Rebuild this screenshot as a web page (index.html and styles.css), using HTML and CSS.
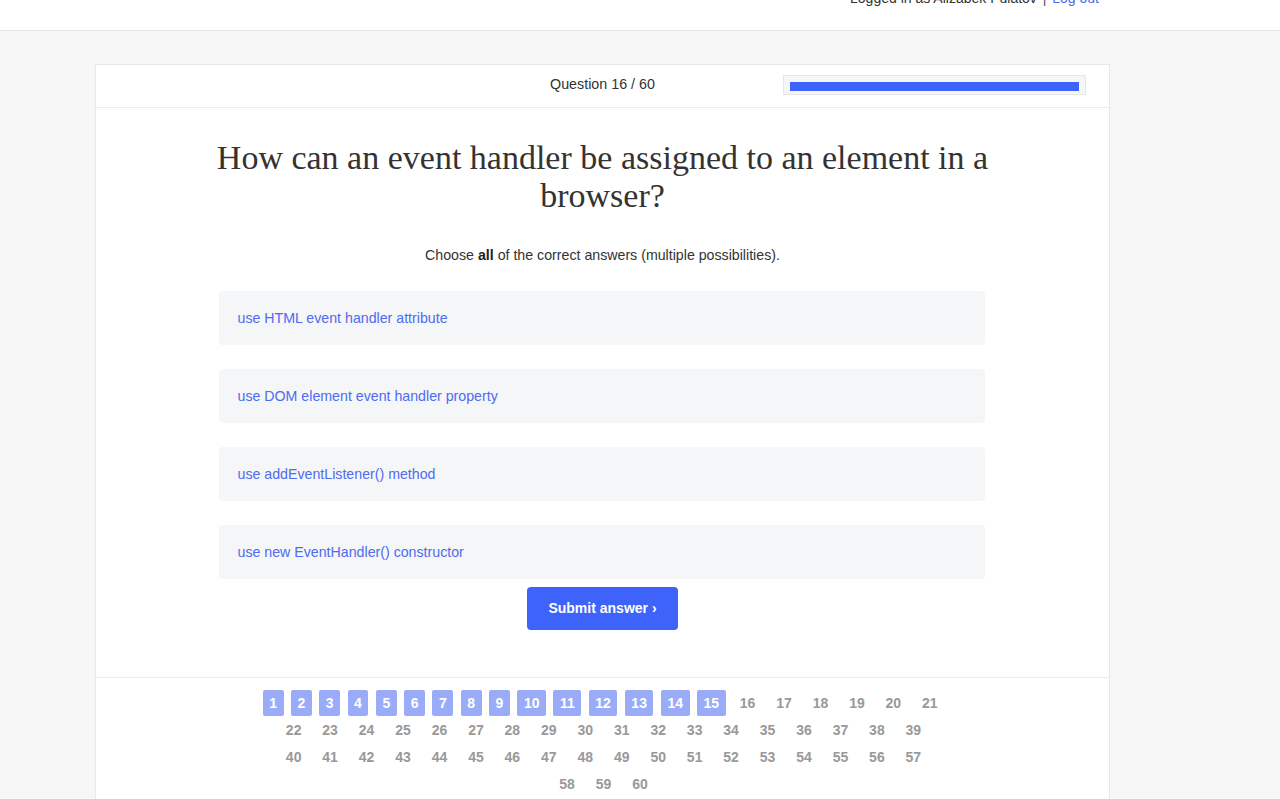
FILE: index.html
```html
<!DOCTYPE html>
<html lang="en">
<head>
<meta charset="utf-8">
<title>Quiz</title>
<link rel="stylesheet" href="styles.css">
</head>
<body>
<header class="topbar">
  <div class="user">Logged in as Alizabek Pulatov <span class="sep">|</span> <a class="logout" href="#">Log out</a></div>
</header>
<main class="card">
  <div class="card-head">
    <div class="qcount">Question 16 / 60</div>
    <div class="progress"><div class="progress-fill"></div></div>
  </div>
  <section class="question">
    <h1 class="title">How can an event handler be assigned to an element in a browser?</h1>
    <p class="hint">Choose <b>all</b> of the correct answers (multiple possibilities).</p>
    <div class="options">
      <div class="option">use HTML event handler attribute</div>
      <div class="option">use DOM element event handler property</div>
      <div class="option">use addEventListener() method</div>
      <div class="option">use new EventHandler() constructor</div>
    </div>
    <button class="submit">Submit answer ›</button>
  </section>
  <nav class="pager">
    <div class="pages">
      <span class="pg done">1</span><span class="pg done">2</span><span class="pg done">3</span><span class="pg done">4</span><span class="pg done">5</span><span class="pg done">6</span><span class="pg done">7</span><span class="pg done">8</span><span class="pg done">9</span><span class="pg done">10</span><span class="pg done">11</span><span class="pg done">12</span><span class="pg done">13</span><span class="pg done">14</span><span class="pg done">15</span><span class="pg">16</span><span class="pg">17</span><span class="pg">18</span><span class="pg">19</span><span class="pg">20</span><span class="pg">21</span><span class="pg">22</span><span class="pg">23</span><span class="pg">24</span><span class="pg">25</span><span class="pg">26</span><span class="pg">27</span><span class="pg">28</span><span class="pg">29</span><span class="pg">30</span><span class="pg">31</span><span class="pg">32</span><span class="pg">33</span><span class="pg">34</span><span class="pg">35</span><span class="pg">36</span><span class="pg">37</span><span class="pg">38</span><span class="pg">39</span><span class="pg">40</span><span class="pg">41</span><span class="pg">42</span><span class="pg">43</span><span class="pg">44</span><span class="pg">45</span><span class="pg">46</span><span class="pg">47</span><span class="pg">48</span><span class="pg">49</span><span class="pg">50</span><span class="pg">51</span><span class="pg">52</span><span class="pg">53</span><span class="pg">54</span><span class="pg">55</span><span class="pg">56</span><span class="pg">57</span><span class="pg">58</span><span class="pg">59</span><span class="pg">60</span>
    </div>
  </nav>
</main>
</body>
</html>
```
FILE: styles.css
```css
html, body {
  margin: 0;
  padding: 0;
}
body {
  background: #f7f7f7;
  font-family: "Liberation Sans", Arial, sans-serif;
  font-size: 14px;
  color: #333;
  overflow: hidden;
}
.topbar {
  background: #fff;
  height: 30px;
  border-bottom: 1px solid #e6e6e6;
  display: flex;
  justify-content: flex-end;
  padding-right: 181px;
}
.user {
  margin-top: -10px;
  line-height: 16px;
  color: #333;
}
.sep {
  color: #555;
  margin: 0 2px;
}
.logout {
  color: #4a6cf0;
  text-decoration: none;
}
.card {
  margin: 33px 0 0 95px;
  width: 1013px;
  background: #fff;
  border: 1px solid #e8e8e8;
  border-bottom: none;
}
.card-head {
  height: 42px;
  border-bottom: 1px solid #ececec;
  display: grid;
  grid-template-columns: 1fr 305px;
  align-items: center;
  padding-right: 23px;
}
.qcount {
  text-align: center;
  padding-left: 328px;
  margin-top: -4px;
  font-size: 14.3px;
}
.progress {
  height: 20px;
  background: #f5f6f7;
  border: 1px solid #e6e6e6;
  box-sizing: border-box;
  padding: 6px 6px 0 6px;
  margin-top: -2px;
  margin-left: 2px;
}
.progress-fill {
  height: 9px;
  background: #3d63fb;
}
.question {
  display: flex;
  flex-direction: column;
  align-items: center;
  padding-top: 31px;
}
.title {
  margin: 0;
  max-width: 800px;
  font-family: "Liberation Serif", "Times New Roman", serif;
  font-weight: normal;
  font-size: 34px;
  line-height: 38px;
  text-align: center;
  color: #333;
}
.hint {
  margin: 30px 0 0;
  line-height: 20px;
  font-size: 14.2px;
  color: #333;
}
.hint b {
  color: #222;
}
.options {
  margin-top: 26px;
  margin-right: 2px;
  width: 766px;
  display: flex;
  flex-direction: column;
  gap: 24px;
}
.option {
  height: 54px;
  box-sizing: border-box;
  background: #f5f6f8;
  border-radius: 4px;
  padding-left: 19px;
  display: flex;
  align-items: center;
  color: #4f6bef;
  font-size: 14.2px;
}
.submit {
  margin-top: 8px;
  width: 151px;
  height: 43px;
  border: none;
  border-radius: 4px;
  background: #3d63fb;
  color: #fff;
  font-family: "Liberation Sans", Arial, sans-serif;
  font-weight: bold;
  font-size: 14px;
  padding: 0 0 2px;
}
.pager {
  margin-top: 47px;
  border-top: 1px solid #ececec;
  padding-top: 12px;
  height: 120px;
  display: flex;
  justify-content: center;
  align-items: flex-start;
}
.pages {
  width: 684.5px;
  margin-left: 2px;
  display: flex;
  flex-wrap: wrap;
  justify-content: center;
  align-content: flex-start;
  column-gap: 7.5px;
  row-gap: 1px;
}
.pg {
  height: 26px;
  line-height: 26px;
  padding: 0 6.7px;
  font-weight: bold;
  color: #999;
  border-radius: 2px;
}
.pg.done {
  padding: 0 6.5px;
  background: #9aacf8;
  color: #fff;
}
```
